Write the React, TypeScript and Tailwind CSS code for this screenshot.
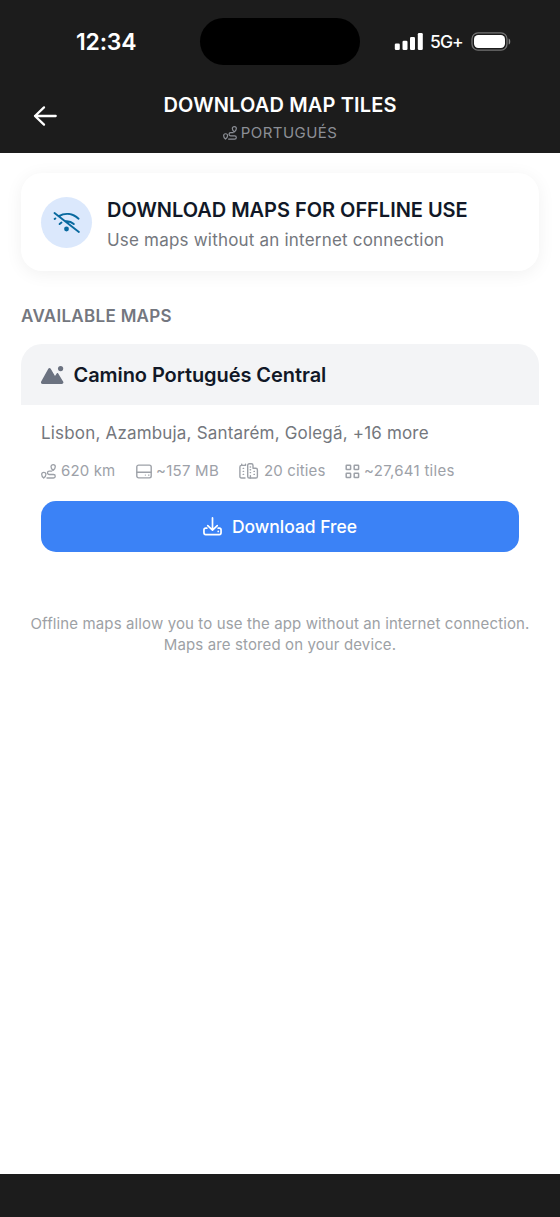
import type { ReactNode } from "react";

function RouteIcon({ className }: { className: string }) {
  return (
    <svg className={className} viewBox="0 0 15 15" fill="none" stroke="currentColor" strokeWidth="1.3" strokeLinecap="round" strokeLinejoin="round">
      <path d="M2.7 14C1.5 13 .7 11.8.7 10.4a2.1 2.1 0 0 1 4.2 0c0 1.4-1 2.6-2.2 3.6Z" />
      <path d="M6 14h6.5a1.7 1.7 0 0 0 0-3.5H8.2a1.7 1.7 0 0 1 0-3.4h2.6M12.1 6.4C10.9 5.4 10 4.3 10 2.8a2.1 2.1 0 0 1 4.3 0c0 1.5-1 2.6-2.2 3.6Z" />
    </svg>
  );
}

function DriveIcon() {
  return (
    <svg className="h-[15px] w-4" viewBox="0 0 16 15" fill="none" stroke="currentColor" strokeWidth="1.4" strokeLinecap="round">
      <rect x=".8" y="1.1" width="14.4" height="12.8" rx="1.8" />
      <path d="M1 8.2h14" />
      <path d="M9.3 11.1h.1M12.5 11.1h.5" strokeWidth="1.1" />
    </svg>
  );
}

function CityIcon() {
  return (
    <svg className="h-4 w-5" viewBox="0 0 20 16" fill="none" stroke="currentColor" strokeWidth="1.4" strokeLinecap="round" strokeLinejoin="round">
      <path d="M6 15H2.5c-1 0-1.6-.6-1.6-1.6V4c0-1 .6-1.6 1.6-1.6h4V1.1M2.7 2.2V1.1" />
      <path d="M10.3 15c-1 0-1.6-.6-1.6-1.6V2.4c0-1 .6-1.6 1.6-1.6h2.1c1 0 1.6.6 1.6 1.6v2.8h2.8c1 0 1.6.6 1.6 1.6v6.6c0 1-.6 1.6-1.6 1.6Z" />
      <path d="M4.2 5.4h.4M4.2 8.4h.4M4.2 11.4h.4M11.2 4h.4M11.2 6.8h.4M11.2 9.6h.4M15 8.4h.4M15 11.4h.4M11.4 12.6V15" />
    </svg>
  );
}

function TilesIcon() {
  return (
    <svg className="h-[15px] w-[15px]" viewBox="0 0 15 15" fill="none" stroke="currentColor" strokeWidth="1.5">
      <rect x="1.2" y="1.2" width="4.4" height="4.4" rx=".6" />
      <rect x="9.2" y="1.2" width="4.4" height="4.4" rx=".6" />
      <rect x="1.2" y="9.2" width="4.4" height="4.4" rx=".6" />
      <rect x="9.2" y="9.2" width="4.4" height="4.4" rx=".6" />
    </svg>
  );
}

function Stat({ icon, children, className }: { icon: ReactNode; children: ReactNode; className: string }) {
  return (
    <div className={`flex shrink-0 items-center ${className}`}>
      {icon}
      <span className="whitespace-nowrap text-[15px] leading-5">{children}</span>
    </div>
  );
}

export default function App() {
  return (
    <div className="flex h-[1217px] w-[560px] flex-col bg-white font-['Inter',sans-serif] antialiased">
      <header className="h-[153px] shrink-0 bg-[#1c1c1c] text-white">
        <div className="flex h-[83px] items-center">
          <div className="w-[200px] pl-[76px] text-[23px] font-semibold leading-7 tracking-[-0.2px]">12:34</div>
          <div className="h-[47px] w-40 shrink-0 rounded-full bg-black" />
          <div className="flex flex-1 items-center pl-[34px]">
            <svg className="h-[19px] w-[30px] shrink-0" viewBox="0 0 30 19" fill="white">
              <rect x=".8" y="11.5" width="5" height="6.5" rx="1.3" />
              <rect x="8.5" y="8.8" width="5" height="9.2" rx="1.3" />
              <rect x="16" y="5" width="5" height="13" rx="1.3" />
              <rect x="23.8" y="1" width="5" height="17" rx="1.3" />
            </svg>
            <span className="ml-[6px] w-[35px] whitespace-nowrap pt-px text-[17.5px] font-medium leading-6 tracking-[-0.9px]">5G+</span>
            <svg className="ml-[6px] h-[19px] w-10 shrink-0" viewBox="0 0 40 19" fill="none">
              <rect x="1" y=".9" width="35" height="17.2" rx="6" stroke="#737373" strokeWidth="1.3" />
              <rect x="3" y="3" width="31" height="13" rx="4.2" fill="white" />
              <path d="M37.7 6.4c2.1 1 2.1 5.2 0 6.2Z" fill="#8a8a8a" />
            </svg>
          </div>
        </div>
        <div className="grid h-[70px] grid-cols-[70px_420px_70px]">
          <button className="flex h-[66px] w-[70px] items-center pl-[33px]" aria-label="Back">
            <svg className="h-6 w-6" viewBox="0 0 24 24" fill="none" stroke="white" strokeWidth="2.3" strokeLinecap="round" strokeLinejoin="round">
              <path d="M22.7 12H2M11 3.4 2 12l9 8.6" />
            </svg>
          </button>
          <div className="flex flex-col items-center pt-[9px]">
            <h1 className="whitespace-nowrap text-[20px] font-semibold leading-[26px] tracking-[0.15px]">DOWNLOAD MAP TILES</h1>
            <div className="mt-1 flex items-center gap-1 text-[#8c8f96]">
              <RouteIcon className="h-[14px] w-[14px]" />
              <span className="text-[15px] leading-[22px] tracking-[0.45px]">PORTUGUÉS</span>
            </div>
          </div>
        </div>
      </header>

      <main className="flex-1 px-[21px] pt-5">
        <section className="flex h-[98px] items-center rounded-[21px] bg-white pl-5 shadow-[0_3px_18px_rgba(0,0,0,0.06)]">
          <div className="flex h-[51px] w-[51px] shrink-0 items-center justify-center rounded-full bg-[#dbe8fc]">
            <svg className="h-7 w-7" viewBox="52.5 208.3 28 28" fill="none" stroke="#08699f" strokeWidth="1.9" strokeLinecap="round">
              <path d="M54 213.4 78.4 232.3M58.3 216.4c6.4-3.5 13.9-2.8 19.8 2.6M65 221.6c3-.3 6 .6 8.3 2.7M54.1 219.3l.8-.6M59.1 224.4l1.9-1.5" />
              <circle cx="66" cy="229.3" r="2.4" fill="#08699f" stroke="none" />
            </svg>
          </div>
          <div className="ml-[15px] whitespace-nowrap pt-[6px]">
            <h2 className="text-[20px] font-semibold leading-7 tracking-[-0.03px] text-[#111827]">DOWNLOAD MAPS FOR OFFLINE USE</h2>
            <p className="mt-[2px] text-[17px] leading-7 tracking-[0.2px] text-[#74777d]">Use maps without an internet connection</p>
          </div>
        </section>

        <h3 className="mt-[33px] text-[17px] font-semibold leading-6 tracking-[0.3px] text-[#74777f]">AVAILABLE MAPS</h3>

        <section className="mt-4 overflow-hidden rounded-[21px]">
          <div className="flex h-[61px] items-center bg-[#f3f4f6] pl-5">
            <svg className="h-5 w-6" viewBox="0 0 24 20" fill="#6b7280">
              <path d="M.2 16.4 7.3 3.7c.6-1 1.8-1 2.4 0l4.3 7.2 1.7-2.4c.4-.6 1.1-.6 1.5 0l4.9 8c.8 1.3 0 2.4-1.4 2.4H1.7C.2 18.9-.6 17.7.2 16.4Z" />
              <circle cx="19.6" cy="3.6" r="2.6" />
            </svg>
            <h4 className="ml-[8.5px] text-[20px] font-semibold leading-7 tracking-[-0.07px] text-[#111827]">Camino Portugués Central</h4>
          </div>
          <div className="px-5 pt-[14px]">
            <p className="text-[17px] leading-7 tracking-[0.18px] text-[#74777d]">Lisbon, Azambuja, Santarém, Golegã, +16 more</p>
            <div className="mt-[14px] flex h-5 text-[#9da1a8]">
              <Stat className="w-[95px] gap-[5px] tracking-[0.15px]" icon={<RouteIcon className="h-[15px] w-[15px]" />}>620 km</Stat>
              <Stat className="w-[103px] gap-1 tracking-[0.25px]" icon={<DriveIcon />}>~157 MB</Stat>
              <Stat className="w-[106px] gap-[5px] tracking-[0.15px]" icon={<CityIcon />}>20 cities</Stat>
              <Stat className="gap-[4px] tracking-[0.28px]" icon={<TilesIcon />}>~27,641 tiles</Stat>
            </div>
            <button className="mt-5 flex h-[51px] w-full items-center justify-center gap-[10px] rounded-[15px] bg-[#3b82f6] text-white">
              <svg className="h-[19px] w-[19px]" viewBox="0 0 20 20" fill="none" stroke="currentColor" strokeWidth="1.8" strokeLinecap="round" strokeLinejoin="round">
                <path d="M10 1v12.6M5 9l5 4.8L15 9M4 11.8H2.8c-1.1 0-1.8.7-1.8 1.8v3.1c0 1.1.7 1.8 1.8 1.8h14.4c1.1 0 1.8-.7 1.8-1.8v-3.1c0-1.1-.7-1.8-1.8-1.8H16M16 15.2h.1" />
              </svg>
              <span className="pt-px text-[17.5px] font-medium leading-6 tracking-[-0.02px]">Download Free</span>
            </button>
          </div>
        </section>

        <p className="mt-[62px] whitespace-nowrap text-center text-[15px] leading-[20.5px] tracking-[0.12px] text-[#9da1a5]">
          Offline maps allow you to use the app without an internet connection.
          <br />
          Maps are stored on your device.
        </p>
      </main>

      <footer className="h-[43px] shrink-0 bg-[#1c1c1c]" />
    </div>
  );
}
